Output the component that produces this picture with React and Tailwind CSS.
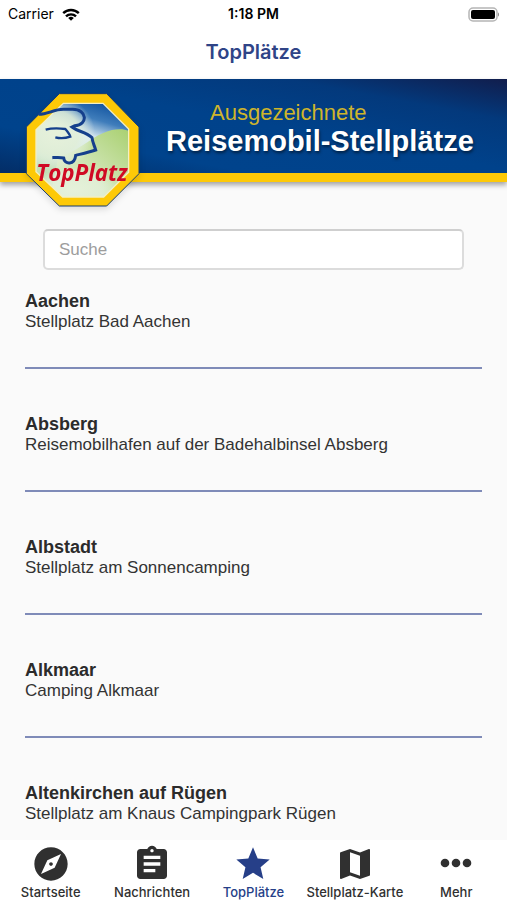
import React from 'react';
import { MdAssignment, MdExplore, MdMap, MdStar } from 'react-icons/md';

const places = [
    { city: 'Aachen', name: 'Stellplatz Bad Aachen' },
    { city: 'Absberg', name: 'Reisemobilhafen auf der Badehalbinsel Absberg' },
    { city: 'Albstadt', name: 'Stellplatz am Sonnencamping' },
    { city: 'Alkmaar', name: 'Camping Alkmaar' },
    { city: 'Altenkirchen auf Rügen', name: 'Stellplatz am Knaus Campingpark Rügen' },
];

const MoreDots = ({ className }) => (
    <svg viewBox="0 0 40 40" className={className} fill="currentColor" aria-hidden="true">
        <circle cx="9" cy="19" r="4.3" />
        <circle cx="20" cy="19" r="4.3" />
        <circle cx="31" cy="19" r="4.3" />
    </svg>
);

const tabs = [
    { label: 'Startseite', icon: MdExplore },
    { label: 'Nachrichten', icon: MdAssignment },
    { label: 'TopPlätze', icon: MdStar, active: true },
    { label: 'Stellplatz-Karte', icon: MdMap },
    { label: 'Mehr', icon: MoreDots },
];

const StatusBar = () => (
    <div className="grid grid-cols-3 items-center h-7 px-2 text-sm text-black">
        <div className="flex items-center gap-2">
            <span>Carrier</span>
            <svg viewBox="0 0 18 13" className="w-[18px] h-[13px]" fill="none" stroke="#000" strokeWidth="2.4" aria-hidden="true">
                <path d="M1.2 5.2a11.2 11.2 0 0 1 15.6 0" />
                <path d="M4 8.4a7.1 7.1 0 0 1 10 0" />
                <path d="M9 12.8L6.2 10a4 4 0 0 1 5.6 0z" fill="#000" stroke="none" />
            </svg>
        </div>
        <span className="text-center font-semibold">1:18 PM</span>
        <svg viewBox="0 0 33 15" className="w-[33px] h-[15px] justify-self-end" aria-hidden="true">
            <rect x="3" y="1" width="28" height="13" rx="4" fill="#fff" stroke="#b5b5b5" strokeWidth="1.5" />
            <rect x="5" y="3" width="24" height="9" rx="2" fill="#000" />
            <path d="M32 5.5c1.3.6 1.3 3.4 0 4z" fill="#8a8a8a" />
        </svg>
    </div>
);

const Logo = () => (
    <svg viewBox="60 40 378 378" className="absolute left-5 top-[9px] w-[126px] h-[126px] drop-shadow-md" role="img" aria-label="TopPlatz">
        <defs>
            <linearGradient id="sky" x1="0.75" y1="0" x2="0.45" y2="1">
                <stop offset="0" stopColor="#0d4f9c" />
                <stop offset="0.2" stopColor="#3f7dbb" />
                <stop offset="0.38" stopColor="#dcebf2" />
                <stop offset="1" stopColor="#b8dba0" />
            </linearGradient>
            <linearGradient id="hill" x1="1" y1="0" x2="0" y2="1">
                <stop offset="0" stopColor="#a9d070" />
                <stop offset="0.5" stopColor="#cde4b0" />
                <stop offset="1" stopColor="#e2f0d8" />
            </linearGradient>
            <radialGradient id="glow">
                <stop offset="0" stopColor="#e6f1da" />
                <stop offset="0.6" stopColor="#e2efd8" stopOpacity="0.85" />
                <stop offset="1" stopColor="#eef6f0" stopOpacity="0" />
            </radialGradient>
            <clipPath id="inner">
                <path d="M190 86H309L386 163V293L311 367H188L108 291V165Z" />
            </clipPath>
        </defs>
        <path d="M178 57H320L417 157V297L320 394H178L79 297V157Z" fill="#fdc907" stroke="#173c72" strokeWidth="3" />
        <g clipPath="url(#inner)">
            <rect x="100" y="80" width="290" height="290" fill="url(#sky)" />
            <path d="M175 245C230 235 270 190 310 175C345 160 370 162 390 170V370H150Z" fill="url(#hill)" />
            <ellipse cx="165" cy="175" rx="120" ry="110" fill="url(#glow)" />
            <ellipse cx="220" cy="345" rx="130" ry="65" fill="url(#glow)" />
        </g>
        <path d="M190 86H309L386 163V293L311 367H188L108 291V165Z" fill="none" stroke="#f4efc2" strokeWidth="4" />
        <g fill="none" stroke="#153f8c">
            <path d="M116 119C145 119 160 104 190 104H218C262 104 265 151 224 153L216 157C235 172 255 170 276 189C278 205 283 211 287 226C265 233 247 237 227 242C224 272 193 271 191 250C180 247 170 248 157 249" strokeWidth="9" />
            <path d="M137 165C155 160 181 161 196 163C201 169 209 178 211 186C196 191 181 192 166 188" strokeWidth="7" />
        </g>
        <text x="109" y="318" fontSize="67" fill="#d00a24" className="font-['Open_Sans',sans-serif] font-bold italic">TopPlatz</text>
    </svg>
);

const Banner = () => (
    <div className="relative h-[103px] shrink-0 border-b-[9px] border-[#fdc907] bg-[linear-gradient(to_bottom_left,#111d4c_0%,#03397c_22%,#00428b_48%,#00438c_75%,#032d66_100%)] shadow-[0_3px_5px_rgba(0,0,0,0.35)]">
        <Logo />
        <div className="pl-[166px] pt-5 font-['Liberation_Sans',Arial,sans-serif] whitespace-nowrap">
            <p className="pl-11 text-[22px] leading-7 text-[#cfb52b]">Ausgezeichnete</p>
            <p className="text-[29px] leading-7 font-bold text-white [text-shadow:1px_2px_3px_rgba(0,0,0,0.5)]">Reisemobil-Stellplätze</p>
        </div>
    </div>
);

const TabBar = () => (
    <nav className="grid grid-cols-5 h-[60px] shrink-0 bg-white">
        {tabs.map(({ label, icon: Icon, active }) => (
            <a
                key={label}
                href="#"
                aria-current={active ? 'page' : undefined}
                className={`flex flex-col items-center pt-1 text-[13px] font-medium whitespace-nowrap ${active ? 'text-[#263f88]' : 'text-[#303030]'}`}
            >
                <Icon className="w-10 h-10" />
                <span className="leading-4">{label}</span>
            </a>
        ))}
    </nav>
);

const App = () => {
    return (
        <div className="flex flex-col h-screen overflow-hidden bg-[#fafafa] font-[Inter,sans-serif]">
            <header className="shrink-0 bg-white">
                <StatusBar />
                <h1 className="h-[51px] pt-2 text-center text-xl leading-8 font-semibold text-[#2f4487]">TopPlätze</h1>
            </header>
            <Banner />

            <main className="flex-1 min-h-0 overflow-hidden px-[25px] pt-[47px] font-['Liberation_Sans',Arial,sans-serif]">
                <div className="px-[18px]">
                    <input
                        type="search"
                        placeholder="Suche"
                        aria-label="Suche"
                        className="block w-full h-[41px] px-[14px] rounded-[5px] border-2 border-[#dcdcdc] border-t-[#cfcfcf] bg-white text-[17px] text-[#333] placeholder:text-[#9d9d9d]"
                    />
                </div>
                <ul className="pt-5">
                    {places.map((place) => (
                        <li key={place.city} className="h-[79px] mb-[44px] border-b-2 border-[#7f8bb8] text-[#333]">
                            <h2 className="text-lg leading-[22px] font-bold text-[#2b2b2b]">{place.city}</h2>
                            <p className="text-[17px] leading-5">{place.name}</p>
                        </li>
                    ))}
                </ul>
            </main>

            <TabBar />
        </div>
    );
};

export default App;
